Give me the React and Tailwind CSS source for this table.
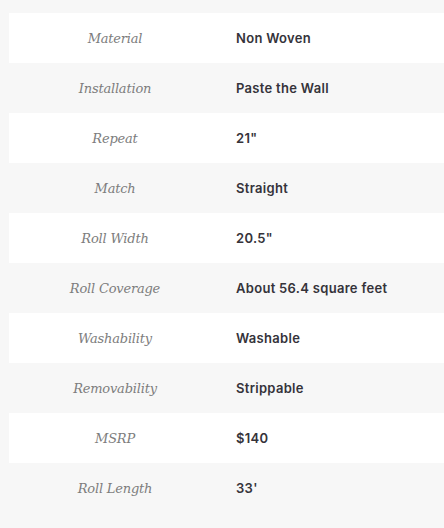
export default function App() {
  const specs = [
    ["Material", "Non Woven"],
    ["Installation", "Paste the Wall"],
    ["Repeat", "21\""],
    ["Match", "Straight"],
    ["Roll Width", "20.5\""],
    ["Roll Coverage", "About 56.4 square feet"],
    ["Washability", "Washable"],
    ["Removability", "Strippable"],
    ["MSRP", "$140"],
    ["Roll Length", "33'"],
  ];

  return (
    <div className="min-h-[528px] w-[444px] bg-[#f7f7f7] pt-[13px] pl-[9px]">
      {/* Spec table */}
      <div className="flex flex-col">
        {specs.map(([label, value], i) => (
          <div
            key={label}
            className={`grid h-[50px] grid-cols-[212px_1fr] items-center pt-[2px] ${
              i % 2 === 0 ? "bg-white" : "bg-[#f7f7f7]"
            }`}
          >
            <div className="text-center font-['DejaVu_Serif',serif] text-[13px] italic tracking-[-0.2px] text-[#7d7d7d]">
              {label}
            </div>
            <div className="pl-[15px] font-['Inter',sans-serif] text-[13px] font-semibold tracking-[0.3px] text-[#35333a]">
              {value}
            </div>
          </div>
        ))}
      </div>
    </div>
  );
}
